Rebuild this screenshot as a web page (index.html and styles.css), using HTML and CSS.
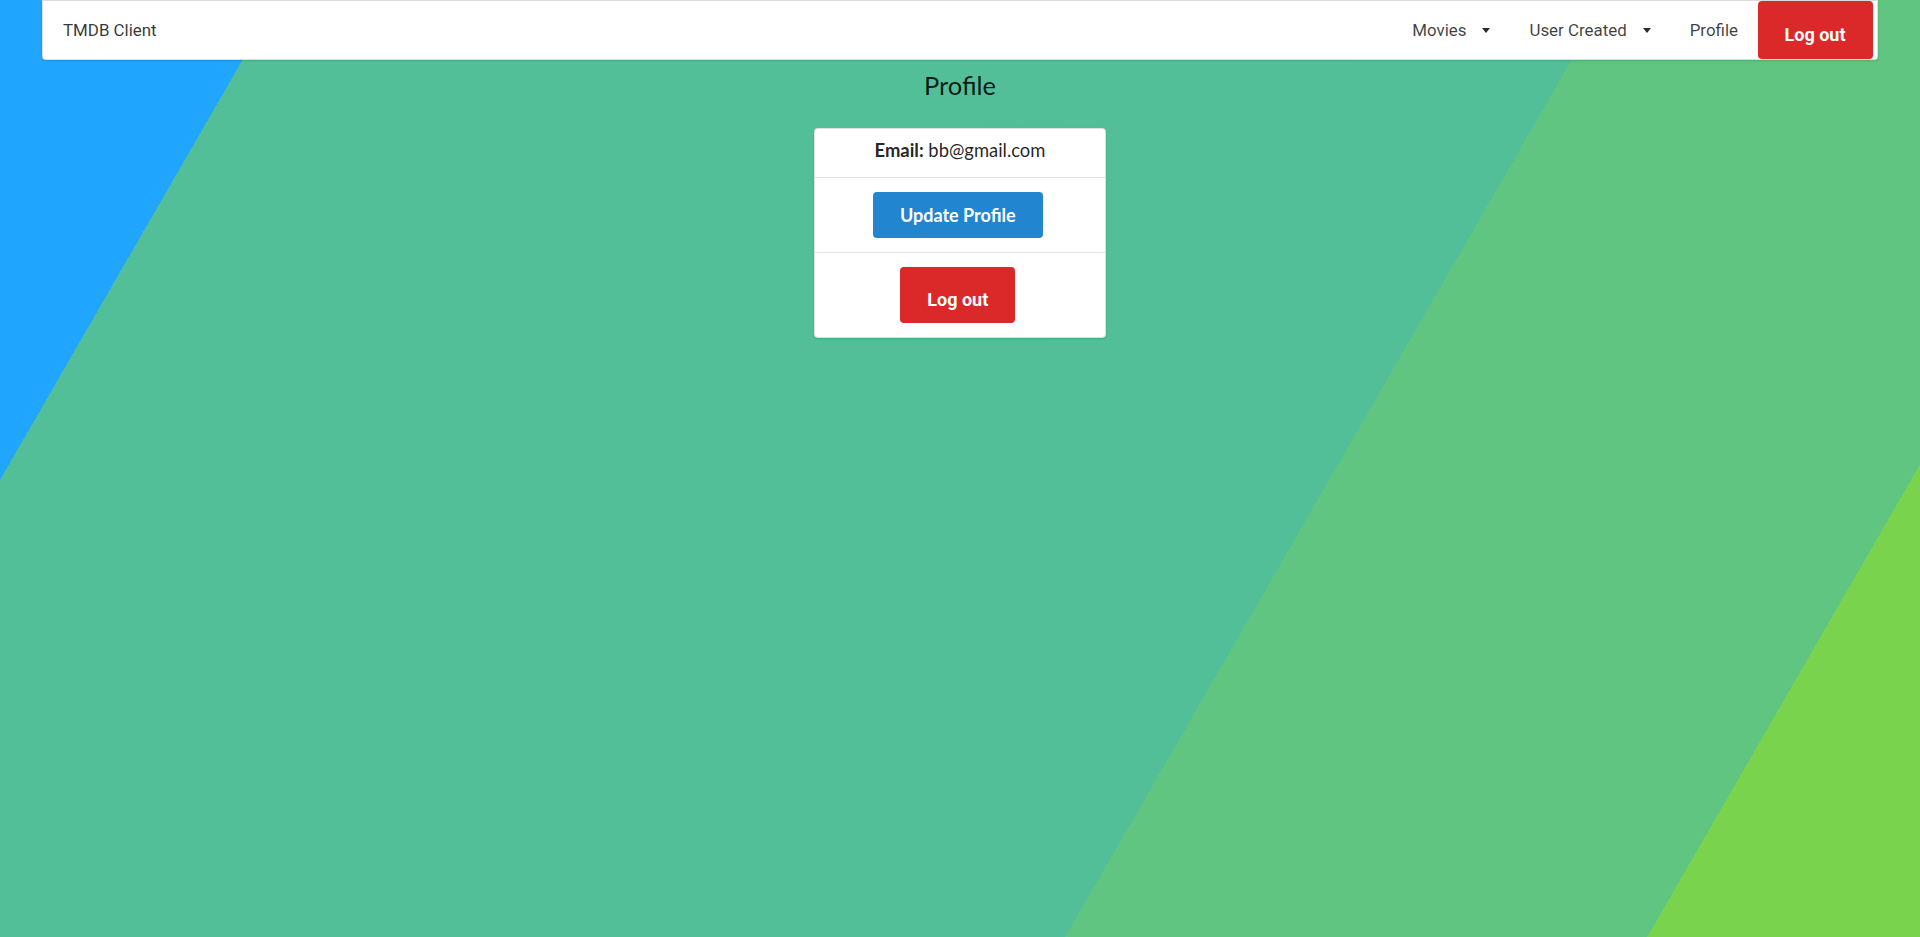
FILE: index.html
```html
<!DOCTYPE html>
<html lang="en">
<head>
<meta charset="utf-8">
<title>TMDB Client</title>
<link rel="stylesheet" href="styles.css">
</head>
<body>
<nav class="navbar">
  <div class="brand">TMDB Client</div>
  <div class="nav-right">
    <div class="nav-item">Movies<span class="caret"></span></div>
    <div class="nav-item">User Created<span class="caret"></span></div>
    <div class="nav-item">Profile</div>
    <button class="btn-logout nav-logout">Log out</button>
  </div>
</nav>
<main class="page">
  <h1 class="title">Profile</h1>
  <section class="card">
    <div class="row row-email"><b>Email:</b> bb@gmail.com</div>
    <div class="row"><button class="btn-update">Update Profile</button></div>
    <div class="row"><button class="btn-logout card-logout">Log out</button></div>
  </section>
</main>
</body>
</html>
```

FILE: styles.css
```css
html, body {
  height: 100%;
}
body {
  margin: 0;
  overflow: hidden;
  font-family: "Roboto", "Liberation Sans", sans-serif;
  background: linear-gradient(120deg,
    #20a6fe 0px, #20a6fe 240px,
    #53bf98 240px, #52bf98 1391px,
    #60c580 1391px, #60c580 1895px,
    #79d34d 1895px, #79d34d 100%);
}
.navbar {
  margin: 0 42px 0 42px;
  height: 58px;
  background: #fff;
  border: 1px solid rgba(34, 36, 38, 0.15);
  border-top-color: #dcdcdc;
  border-radius: 0 0 4px 4px;
  box-shadow: 0 1px 2px 0 rgba(34, 36, 38, 0.15);
  display: flex;
  align-items: center;
  justify-content: space-between;
  padding: 0 0 0 20px;
}
.brand {
  font-size: 16.9px;
  color: rgba(0, 0, 0, 0.8);
}
.nav-right {
  display: flex;
  align-items: center;
  height: 100%;
}
.nav-item {
  display: flex;
  align-items: center;
  padding: 0 19.5px;
  font-size: 16.9px;
  color: rgba(0, 0, 0, 0.75);
}
.caret {
  display: inline-block;
  width: 0;
  height: 0;
  margin-left: 16px;
  border-left: 4px solid transparent;
  border-right: 4px solid transparent;
  border-top: 5px solid #2b2b2b;
}
.btn-logout {
  font-family: "Roboto", "Liberation Sans", sans-serif;
  font-weight: 700;
  font-size: 18px;
  line-height: 18px;
  color: #fff;
  background: #db2828;
  border: none;
  border-radius: 4px;
  padding: 0 27px;
  margin: 0 4.5px 0 0;
  cursor: pointer;
}
.nav-logout {
  height: 58px;
  padding-top: 25px;
  padding-bottom: 15px;
  align-self: flex-start;
}
.page {
  display: flex;
  flex-direction: column;
  align-items: center;
}
.title {
  margin: 10px 0 28px;
  font-family: "Lato", "Liberation Sans", sans-serif;
  font-weight: 400;
  font-size: 25.5px;
  line-height: 30px;
  color: rgba(0, 0, 0, 0.87);
}
.card {
  width: 290px;
  background: #fff;
  border: 1px solid rgba(34, 36, 38, 0.15);
  border-radius: 4px;
  box-shadow: 0 1px 2px 0 rgba(34, 36, 38, 0.15);
  font-family: "Lato", "Liberation Sans", sans-serif;
  font-size: 18.4px;
  color: rgba(0, 0, 0, 0.87);
}
.row {
  display: flex;
  justify-content: center;
  padding: 14px;
}
.row + .row {
  border-top: 1px solid rgba(34, 36, 38, 0.12);
}
.row-email {
  padding: 9px 14px 14px;
  line-height: 25px;
  white-space: pre;
}
.btn-update {
  font-family: "Lato", "Liberation Sans", sans-serif;
  font-weight: 700;
  font-size: 18px;
  line-height: 18px;
  height: 46px;
  padding: 0 27px;
  margin: 0 4.5px 0 0;
  color: #fff;
  background: #2185d0;
  border: none;
  border-radius: 4px;
  cursor: pointer;
}
.card-logout {
  height: 56px;
  padding-top: 24px;
  padding-bottom: 14px;
}
```
